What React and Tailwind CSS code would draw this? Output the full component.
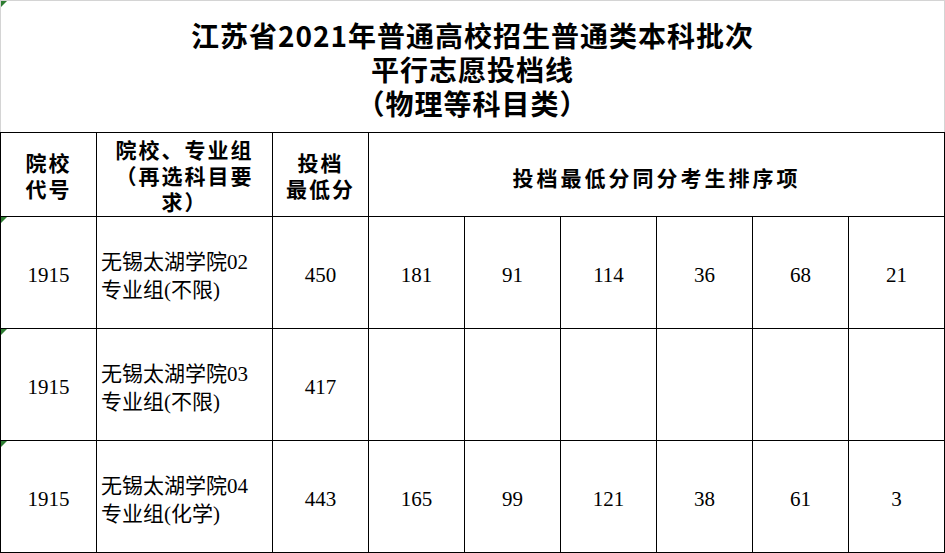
import React from "react";

const rows = [
  { code: "1915", name: ["无锡太湖学院02", "专业组(不限)"], score: "450", ranks: ["181", "91", "114", "36", "68", "21"] },
  { code: "1915", name: ["无锡太湖学院03", "专业组(不限)"], score: "417", ranks: ["", "", "", "", "", ""] },
  { code: "1915", name: ["无锡太湖学院04", "专业组(化学)"], score: "443", ranks: ["165", "99", "121", "38", "61", "3"] },
];

// little green marker in the cell corner (spreadsheet style)
const Flag = () => (
  <span className="absolute left-0 top-0 w-[6px] h-[6px] bg-[#2e7d32] [clip-path:polygon(0_0,100%_0,0_100%)]" />
);

const head =
  "bg-white flex items-center justify-center text-center font-['Noto_Sans_CJK_SC','Noto_Sans',sans-serif] text-[21px] font-bold leading-[26px] tracking-[2px]";
const body =
  "bg-white flex items-center justify-center pt-[6px] font-['Liberation_Serif','Noto_Sans_CJK_SC',serif] text-[21px]";

const App = () => {
  return (
    <div className="w-[945px] h-[553px] bg-white overflow-hidden text-black">
      {/* title block */}
      <div className="relative h-[132px] border-t border-l border-r border-[#d4d4d4] pt-[17px] font-['Noto_Sans_CJK_SC','Noto_Sans',sans-serif]">
        <Flag />
        <div className="text-center text-[28px] font-bold leading-[34px] tracking-[1px]">
          <p>江苏省2021年普通高校招生普通类本科批次</p>
          <p>平行志愿投档线</p>
          <p>（物理等科目类）</p>
        </div>
      </div>

      <div className="grid grid-cols-[95px_175px_95px_repeat(6,95px)] grid-rows-[83px_111px_111px_111px] gap-px p-px bg-black">
        <div className={head}>
          <p>院校<br />代号</p>
        </div>
        <div className={head}>
          <p>院校、专业组<br />（再选科目要<br />求）</p>
        </div>
        <div className={head}>
          <p>投档<br />最低分</p>
        </div>
        <div className={`col-span-6 pt-[4px] ${head} tracking-[3px]`}>
          投档最低分同分考生排序项
        </div>

        {rows.map((r, i) => (
          <React.Fragment key={i}>
            <div className={`relative ${body}`}>
              <Flag />
              {r.code}
            </div>
            <div className={`${body} justify-start pl-[4px] leading-[28px] text-[21.5px]`}>
              <p>{r.name[0]}<br />{r.name[1]}</p>
            </div>
            <div className={body}>{r.score}</div>
            {r.ranks.map((v, j) => (
              <div key={j} className={body}>
                {v}
              </div>
            ))}
          </React.Fragment>
        ))}
      </div>
    </div>
  );
};

export default App;
